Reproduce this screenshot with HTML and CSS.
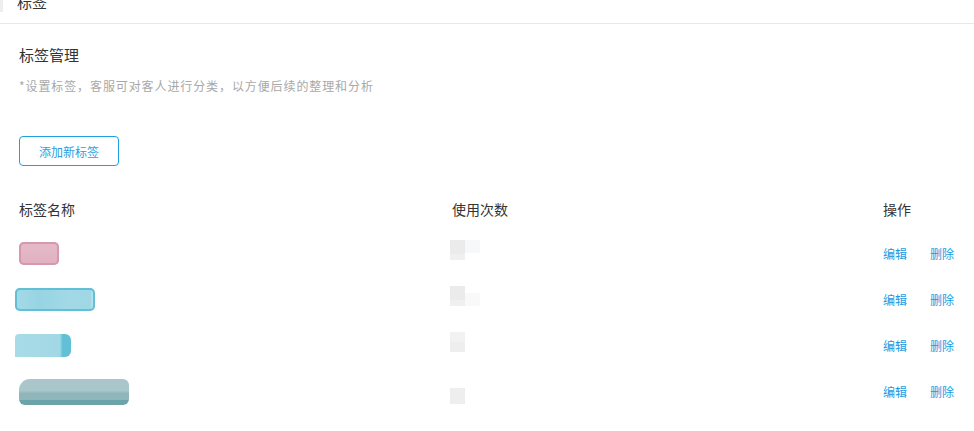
FILE: index.html
```html
<!DOCTYPE html>
<html lang="zh">
<head>
<meta charset="utf-8">
<link rel="stylesheet" href="styles.css">
</head>
<body>
<div class="topbar">
  <span class="topbar-mark"></span>
  <span class="topbar-title">标签</span>
</div>
<div class="content">
  <h2 class="title">标签管理</h2>
  <p class="desc">*设置标签，客服可对客人进行分类，以方便后续的整理和分析</p>
  <button class="btn-add">添加新标签</button>
  <div class="table">
    <div class="row head">
      <div class="c-name">标签名称</div>
      <div class="c-count">使用次数</div>
      <div class="c-ops">操作</div>
    </div>
    <div class="row">
      <div class="c-name"><span class="tag tag-pink"></span></div>
      <div class="c-count"><span class="num"><i class="px a"></i><i class="px b"></i></span></div>
      <div class="c-ops"><a class="op">编辑</a><a class="op">删除</a></div>
    </div>
    <div class="row">
      <div class="c-name"><span class="tag tag-blue"></span></div>
      <div class="c-count"><span class="num"><i class="px a"></i><i class="px c"></i></span></div>
      <div class="c-ops"><a class="op">编辑</a><a class="op">删除</a></div>
    </div>
    <div class="row">
      <div class="c-name"><span class="tag tag-blue2"></span></div>
      <div class="c-count"><span class="num"><i class="px d"></i></span></div>
      <div class="c-ops"><a class="op">编辑</a><a class="op">删除</a></div>
    </div>
    <div class="row">
      <div class="c-name"><span class="tag tag-grey"></span></div>
      <div class="c-count"><span class="num low"><i class="px e"></i></span></div>
      <div class="c-ops"><a class="op">编辑</a><a class="op">删除</a></div>
    </div>
  </div>
</div>
</body>
</html>
```
FILE: styles.css
```css
* { box-sizing: border-box; }
html, body { margin: 0; padding: 0; background: #fff; }
body {
  font-family: "Noto Sans CJK SC", "Noto Sans", sans-serif;
  color: #333;
  width: 974px;
  height: 431px;
  overflow: hidden;
}
.topbar {
  height: 24px;
  border-bottom: 1px solid #e8e8e8;
  display: flex;
  align-items: flex-start;
}
.topbar-mark {
  width: 3px;
  height: 12px;
  background: #eeeeee;
}
.topbar-title {
  margin-left: 14px;
  margin-top: -9px;
  font-size: 15px;
  line-height: 22px;
  color: #333;
}
.content { padding: 0 0 0 19px; }
.title {
  margin: 20px 0 0;
  font-size: 15px;
  font-weight: normal;
  line-height: 22px;
  color: #333;
}
.desc {
  margin: 11px 0 0;
  font-size: 12px;
  line-height: 18px;
  letter-spacing: 0.9px;
  color: #a8a8a8;
}
.btn-add {
  margin-top: 41px;
  width: 100px;
  height: 30px;
  border: 1px solid #1e9fe0;
  border-radius: 4px;
  background: #fff;
  color: #2a9ee0;
  font-family: inherit;
  font-size: 12px;
  padding: 0;
  display: block;
  cursor: pointer;
}
.table { margin-top: 33px; }
.row {
  display: flex;
  align-items: center;
  height: 46px;
}
.row.head {
  height: 20px;
  margin-bottom: 11px;
  font-size: 14px;
  color: #333;
}
.c-name { width: 433px; display: flex; }
.c-count { width: 431px; }
.c-ops { display: flex; gap: 23px; }
.op {
  font-size: 12px;
  color: #1a9be0;
  cursor: pointer;
}
.tag {
  display: block;
  height: 23px;
  border-radius: 5px;
}
.tag-pink {
  width: 40px;
  background: linear-gradient(#e6bac8, #e0b1c1);
  box-shadow: inset 0 0 0 2px #d898ac;
}
.tag-blue {
  width: 80px;
  margin-left: -4px;
  background: linear-gradient(90deg, #a6dae7 0, #97d4e3 30%, #a3d9e6 70%, #9fd7e5 94%, #d6eff5 100%);
  box-shadow: inset 0 0 0 2px #62c0d6;
}
.tag-blue2 {
  width: 56px;
  margin-left: -4px;
  background: linear-gradient(90deg, #a8dbe7 0, #a2d8e5 80%, #62c0d6 85%);
  border-radius: 4px 6px 6px 0;
}
.tag-grey {
  width: 110px;
  height: 26px;
  margin-top: 2px;
  border-radius: 11px 6px 6px 6px;
  background: linear-gradient(#a9c6ca 0, #a9c6ca 45%, #90b6bb 55%, #8fb6bb 80%, #6aa3aa 80%);
}
.num { display: flex; margin-left: -2px; margin-top: -6px; }
.num.low { margin-top: 10px; }
.px { display: block; width: 15px; height: 20px; }
.px.a { background: linear-gradient(#ecebeb 0 70%, #f1f0f0 70%); }
.px.b { background: #f6f8fb; height: 13px; }
.px.c { background: #f9f9f9; height: 13px; margin-top: 7px; }
.px.d { background: linear-gradient(#f2f2f2 0 50%, #eeeeee 50%); }
.px.e { background: #eeeeee; height: 16px; }
```
